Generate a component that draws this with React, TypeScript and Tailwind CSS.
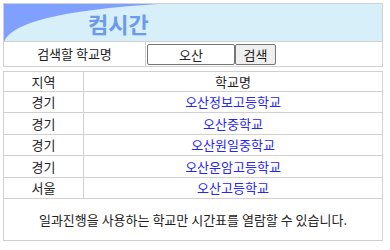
const schools = [
  { region: "경기", name: "오산정보고등학교" },
  { region: "경기", name: "오산중학교" },
  { region: "경기", name: "오산원일중학교" },
  { region: "경기", name: "오산운암고등학교" },
  { region: "서울", name: "오산고등학교" },
];

export default function App() {
  return (
    <div
      className="h-[250px] w-[390px] bg-white px-[3px] pt-[3px] text-[13px] text-[#222]"
      style={{ fontFamily: '"Noto Sans CJK KR", "Noto Sans", sans-serif' }}
    >
      {/* search box */}
      <div className="w-[380px] border border-[#d0d0d0]">
        <div className="relative h-[38px] overflow-hidden border-b border-[#d0d0d0] bg-[#d6eff9]">
          <svg className="absolute left-0 top-0" width="160" height="38" viewBox="0 0 160 38">
            <path d="M0 0 V38 Q10 9 154 0 Z" fill="#80a0ff" />
          </svg>
          <div className="relative flex h-full items-center pl-[84px] text-[22px] font-bold leading-none text-[#6b9bea]">
            컴시간
          </div>
        </div>
        <div className="flex h-[24px]">
          <div className="flex w-[142px] items-center justify-center border-r border-[#d0d0d0]">
            검색할 학교명
          </div>
          <div className="flex items-center pl-[1px]">
            <input
              className="h-[21px] w-[88px] rounded-[2px] border border-[#767676] bg-white text-center text-[13px] outline-none"
              defaultValue="오산"
            />
            <button className="h-[21px] w-[41px] rounded-[2px] border border-[#767676] bg-[#efefef] text-[13px] leading-none">
              검색
            </button>
          </div>
        </div>
      </div>

      {/* results */}
      <div className="mt-[4px] w-[380px] border border-[#d0d0d0]">
        <div className="flex h-[20px] border-b border-[#d0d0d0]">
          <div className="flex w-[80px] items-center justify-center border-r border-[#d0d0d0]">지역</div>
          <div className="flex flex-1 items-center justify-center">학교명</div>
        </div>
        {schools.map((s) => (
          <div key={s.name} className="flex h-[21.4px] border-b border-[#d0d0d0]">
            <div className="flex w-[80px] items-center justify-center border-r border-[#d0d0d0]">{s.region}</div>
            <div className="flex flex-1 items-center justify-center">
              <a href="#" className="text-[#2626f0]">
                {s.name}
              </a>
            </div>
          </div>
        ))}
        <div className="flex h-[41px] items-center justify-center">
          일과진행을 사용하는 학교만 시간표를 열람할 수 있습니다.
        </div>
      </div>
    </div>
  );
}
